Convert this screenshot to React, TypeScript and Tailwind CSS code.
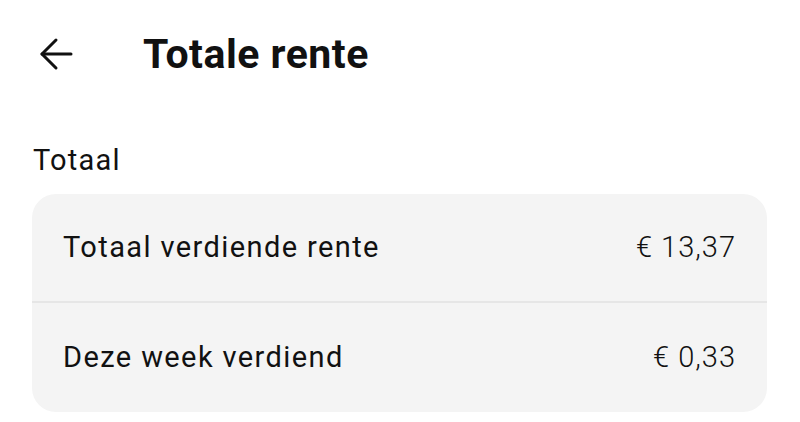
import React from "react";

const rows = [
    { label: "Totaal verdiende rente", value: "€ 13,37" },
    { label: "Deze week verdiend", value: "€ 0,33" },
];

function BackArrow() {
    return (
        <svg width="34" height="34" viewBox="0 0 34 34" fill="none" stroke="#111" strokeWidth="3" strokeLinecap="round" strokeLinejoin="round">
            <path d="M32 17H3" />
            <path d="M17 3L3 17l14 14" />
        </svg>
    );
}

export default function App() {
    return (
        <div className="h-[422px] w-[800px] overflow-hidden bg-white text-[#111] font-['Roboto',sans-serif]">
            <div className="flex h-[108px] items-center pl-[39px]">
                <BackArrow />
                <h1 className="ml-[70px] text-[41px] font-bold leading-none tracking-[0.5px]">Totale rente</h1>
            </div>
            <div className="px-[32px]">
                <div className="flex h-[86px] items-center pl-[1px] pt-[18px] text-[29px] leading-none tracking-[1.2px]">Totaal</div>
                <div className="mr-[1px] rounded-[24px] bg-[#f4f4f4]">
                    {rows.map((row, i) => (
                        <div
                            key={row.label}
                            className={
                                i === 0
                                    ? "flex h-[109px] items-center justify-between border-b-2 border-[#e6e6e6] pl-[31px] pr-[31px]"
                                    : "flex h-[109px] items-center justify-between pl-[31px] pr-[31px]"
                            }
                        >
                            <span className="text-[29px] leading-none tracking-[1.4px]">{row.label}</span>
                            <span className="text-[29px] font-light leading-none tracking-[1px]">{row.value}</span>
                        </div>
                    ))}
                </div>
            </div>
        </div>
    );
}
